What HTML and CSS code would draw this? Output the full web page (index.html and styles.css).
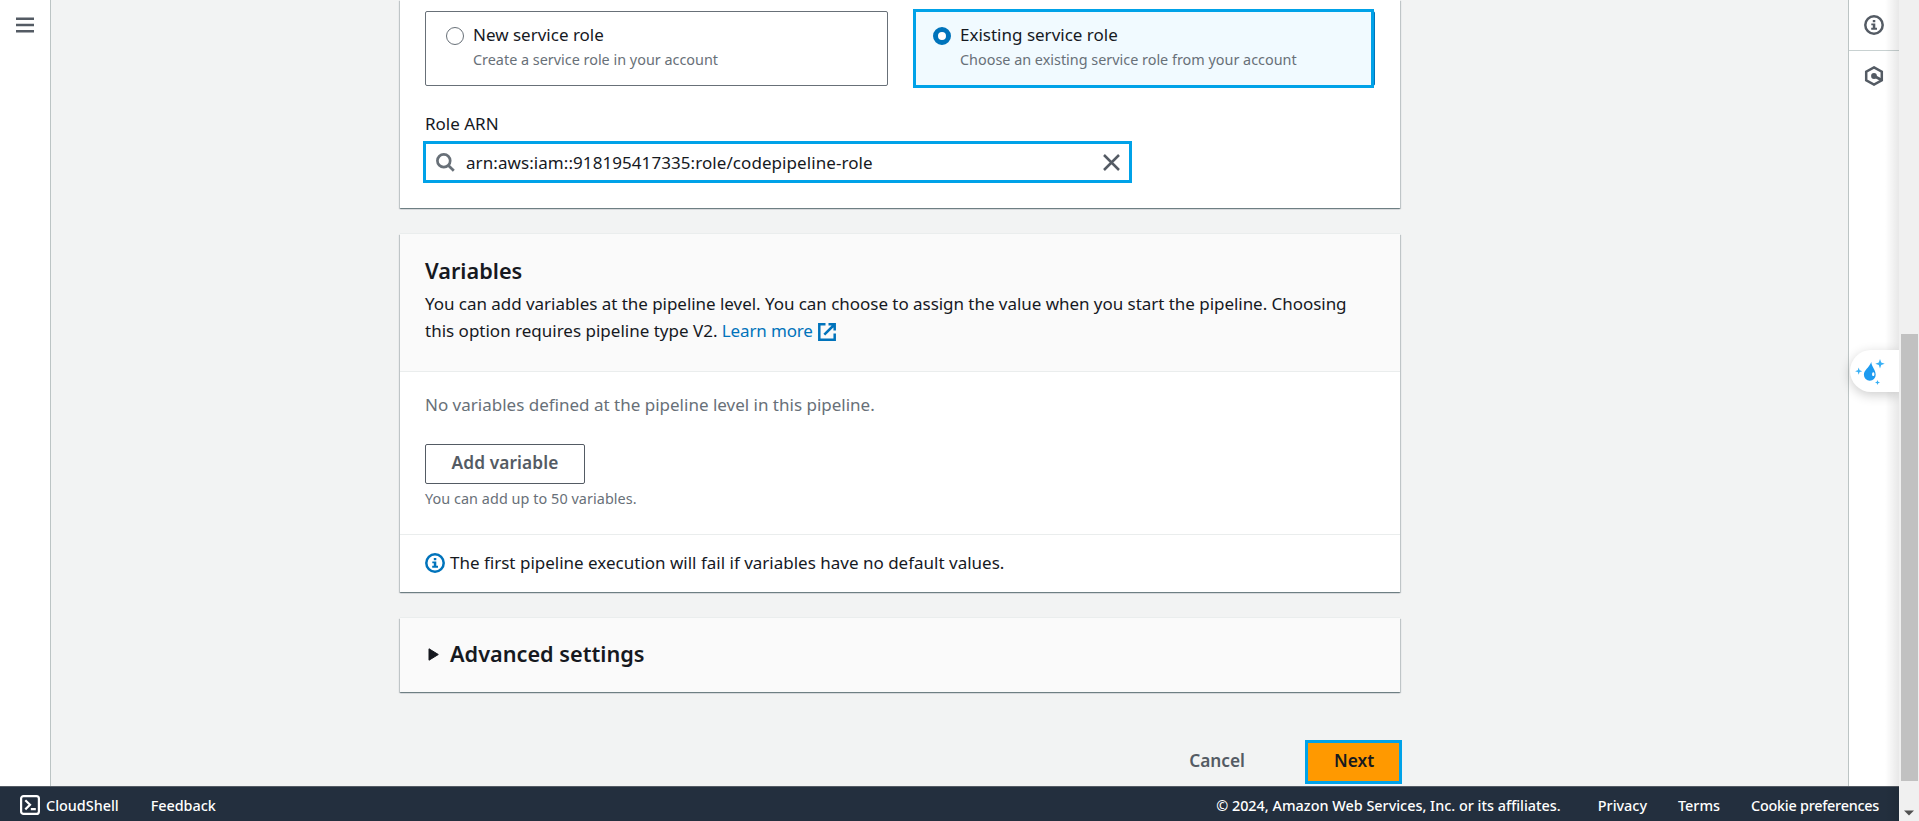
FILE: index.html
```
<!DOCTYPE html>
<html lang="en">
<head>
<meta charset="utf-8">
<title>Create new pipeline</title>
<link rel="stylesheet" href="styles.css">
</head>
<body>
<div class="app">
  <div class="workspace">
    <nav class="rail rail-left">
      <svg class="menu-icon" width="18" height="18" viewBox="0 0 18 18"><path d="M0 2.700h18M0 9h18M0 15.300h18" stroke="#545b64" stroke-width="2.500"/></svg>
    </nav>
    <main class="content">
      <section class="panel panel-role">
        <div class="tiles">
          <div class="tile">
            <span class="radio"></span>
            <div class="tile-text"><div class="label">New service role</div><div class="hint">Create a service role in your account</div></div>
          </div>
          <div class="tile tile-selected">
            <span class="radio radio-checked"></span>
            <div class="tile-text"><div class="label">Existing service role</div><div class="hint">Choose an existing service role from your account</div></div>
            <span class="tile-frame"></span>
          </div>
        </div>
        <div class="label field-label">Role ARN</div>
        <div class="search">
          <svg width="19" height="19" viewBox="0 0 19 19" fill="none" stroke="#687078" stroke-width="2.700"><circle cx="7.800" cy="7.800" r="6.400"/><path d="M12.200 12.200l5.600 5.600"/></svg>
          <span class="search-value">arn:aws:iam::918195417335:role/codepipeline-role</span>
          <svg width="17" height="17" viewBox="0 0 17 17"><path d="M1 1l15 15M16 1L1 16" stroke="#545b64" stroke-width="2.500"/></svg>
        </div>
      </section>

      <section class="panel">
        <header class="panel-head">
          <h2>Variables</h2>
          <p><span class="lead">You can add variables at the pipeline level. You can choose to assign the value when you start the pipeline. Choosing</span><br>this option requires pipeline type V2. <a class="link">Learn more</a><svg class="external" width="18" height="18" viewBox="0 0 18 18" fill="none" stroke="#0073bb" stroke-width="2.500"><path d="M7.500 1.300H1.300v15.400h15.400V10.500M10.500 1.300h6.200v6.200M16.500 1.500L6.300 11.700"/></svg></p>
        </header>
        <div class="panel-body">
          <p class="empty">No variables defined at the pipeline level in this pipeline.</p>
          <button class="btn">Add variable</button>
          <div class="hint">You can add up to 50 variables.</div>
        </div>
        <footer class="panel-foot">
          <svg width="20" height="20" viewBox="0 0 20 20"><circle cx="10" cy="10" r="8.700" fill="none" stroke="#0073bb" stroke-width="2.500"/><path d="M8.800 5h2.500v2.200H8.800zM7.300 8.400h4v4.400H13v2H7.200v-2h1.600v-2.500H7.300z" fill="#0073bb"/></svg>
          <span>The first pipeline execution will fail if variables have no default values.</span>
        </footer>
      </section>

      <section class="panel panel-advanced">
        <svg width="11" height="13" viewBox="0 0 11 13"><path d="M1 .8L10.300 6.500 1 12.200z" fill="#16191f" stroke="#16191f" stroke-linejoin="round"/></svg>
        <h2>Advanced settings</h2>
      </section>

      <div class="actions">
        <button class="btn btn-link">Cancel</button>
        <button class="btn btn-primary">Next</button>
      </div>
    </main>
    <aside class="rail rail-right">
      <div class="rail-item">
        <svg width="20" height="20" viewBox="0 0 20 20"><circle cx="10" cy="10" r="8.700" fill="none" stroke="#545b64" stroke-width="2.500"/><path d="M8.800 5h2.500v2.200H8.800zM7.300 8.400h4v4.400H13v2H7.200v-2h1.600v-2.500H7.300z" fill="#545b64"/></svg>
      </div>
      <div class="rail-item">
        <svg width="20" height="20" viewBox="0 0 20 20"><path d="M10 1.400L17.800 5.700V14.300L10 18.600 2.200 14.300V5.700z" fill="none" stroke="#545b64" stroke-width="2.500"/><circle cx="10" cy="10" r="2.900" fill="#545b64"/><path d="M10 10l7.600 4" stroke="#545b64" stroke-width="2.600"/></svg>
      </div>
    </aside>
  </div>
  <footer class="bar">
    <svg width="20" height="20" viewBox="0 0 20 20" fill="none" stroke="#fff" stroke-width="2.200"><rect x="1.100" y="1.100" width="17.800" height="17.800" rx="2.500"/><path d="M5.300 5.200L10 9.800l-4.700 4.600M10.800 14.200h5"/></svg>
    <span class="shell">CloudShell</span>
    <span class="feedback">Feedback</span>
    <span class="copyright">© 2024, Amazon Web Services, Inc. or its affiliates.</span>
    <span class="privacy">Privacy</span>
    <span class="terms">Terms</span>
    <span class="cookies">Cookie preferences</span>
  </footer>
  <div class="edge-shade"></div>
  <div class="widget">
    <svg width="49" height="42" viewBox="0 0 49 42" fill="#1d9bf0"><path d="M21.300 12C21.500 17 25.700 19.500 25.700 24.800a5.900 6 0 0 1-11.800 0C13.900 20 19 18 21.300 12z"/><path d="M23.200 22.300a1.200 1.900 0 1 0 .1 0z" fill="#fff"/><path fill="#38b0f5" d="M30 9l1.200 3.500 3.500 1.200-3.500 1.200L30 18.400l-1.200-3.500-3.500-1.200 3.500-1.200zM8.700 17.600l.9 2.700 2.700.9-2.700.9-.9 2.700-.9-2.700-2.700-.9 2.700-.9zM27.500 30l.7 1.800 1.800.7-1.800.7-.7 1.800-.7-1.800-1.800-.7 1.800-.7z"/></svg>
  </div>
</div>
<div class="scrollbar">
  <div class="thumb"></div>
  <svg class="arrow" width="10" height="6" viewBox="0 0 10 6"><path d="M0 .5h10L5 5.500z" fill="#505050"/></svg>
</div>
</body>
</html>
```
FILE: styles.css
```
* { box-sizing: border-box; }
body {
  margin: 0;
  height: 821px;
  display: flex;
  overflow: hidden;
  background: #f2f3f3;
  color: #16191f;
  font: 400 17px/27px "Noto Sans", sans-serif;
}
svg { display: block; flex: none; }
h2, p { margin: 0; }
h2 { font-size: 21.7px; line-height: 30px; font-weight: 600; }

.app { position: relative; flex: 1; display: flex; flex-direction: column; }
.workspace { height: 786px; display: flex; }

.rail { flex: none; background: #fff; }
.rail-left { width: 51px; border-right: 1px solid #bcc4c4; padding: 16px; }
.rail-right { width: 51px; border-left: 1px solid #bcc4c4; }
.rail-item { height: 51px; display: flex; align-items: center; justify-content: center; border-bottom: 1px solid #c8d1d1; }
.rail-item + .rail-item { height: 50px; border-bottom: 0; }

.content { width: 1000px; margin-left: 349px; margin-right: auto; display: flex; flex-direction: column; }
.panel {
  flex: none;
  margin-bottom: 26px;
  background: #fff;
  box-shadow: 0 1px 1px 0 rgba(0, 28, 36, .35), 1px 1px 1px 0 rgba(0, 28, 36, .16), -1px 1px 1px 0 rgba(0, 28, 36, .16), 0 -1px 0 0 #eaeded;
}
.panel-role { height: 208px; padding: 11px 25px 25px; }

.tiles { display: grid; grid-template-columns: 463px 462px; column-gap: 25px; height: 75px; }
.tile { position: relative; display: flex; gap: 9px; padding: 9px 20px; border: 1px solid #687078; border-radius: 2px; }
.tile-selected { padding-left: 19px; background: #f1faff; border-color: #0073bb; }
.tile-frame { position: absolute; left: -1px; top: -3px; width: 461px; height: 79px; border: 3px solid #00a2e8; }
.radio { flex: none; width: 18px; height: 18px; margin-top: 6px; border: 1px solid #687078; border-radius: 50%; background: #fff; }
.radio-checked { border: 5.500px solid #0073bb; }
.hint { font-size: 14.4px; line-height: 22px; color: #687078; }
.tile .hint { margin-top: 1px; }
.field-label { margin-top: 24px; }
.search {
  display: flex;
  align-items: center;
  width: 709px;
  height: 42px;
  margin: 4px 0 0 -2px;
  padding: 0 9px 0 10px;
  border: 3px solid #00a2e8;
}
.search-value { flex: 1; margin-left: 11px; letter-spacing: .07px; }

.panel-head { height: 138px; padding: 22px 25px 0; background: #fafafa; border-bottom: 1px solid #eaeded; }
.panel-head p { margin-top: 4px; white-space: nowrap; }
.lead { letter-spacing: -.04px; }
.link { color: #0073bb; letter-spacing: -.15px; }
.external { display: inline-block; margin-left: 5px; vertical-align: -4px; }
.panel-body { height: 162px; padding: 19px 25px 0; }
.empty { color: #687078; }
.btn {
  display: block;
  height: 40px;
  padding: 0 25px 4px;
  border: 1px solid #545b64;
  border-radius: 2px;
  background: #fff;
  color: #545b64;
  font: 600 17.3px/27px "Noto Sans", sans-serif;
}
.panel-body .btn { width: 160px; margin: 26px 0 4px; letter-spacing: .1px; }
.panel-body .hint { letter-spacing: .06px; }
.panel-foot { height: 58px; display: flex; gap: 5px; padding: 14px 25px; border-top: 1px solid #eaeded; }
.panel-foot svg { margin-top: 4px; }
.panel-advanced { height: 74px; display: flex; gap: 11px; padding: 21px 28px; background: #fafafa; }
.panel-advanced svg { margin-top: 9px; }

.actions { display: flex; justify-content: flex-end; align-items: center; gap: 34px; margin: 22px -2px 0 0; }
.btn-link { border-color: transparent; background: none; }
.btn-primary { width: 97px; height: 44px; padding-left: 26px; border: 3px solid #00a2e8; border-radius: 0; background: #f90; color: #16191f; }

.bar {
  height: 35px;
  display: flex;
  align-items: center;
  padding: 2px 20px 0 20px;
  border-top: 1px solid #545b64;
  background: #232f3e;
  color: #fff;
  font-size: 14.4px;
  font-weight: 500;
  white-space: nowrap;
}
.shell { margin-left: 6px; }
.feedback { margin-left: 32px; letter-spacing: -.05px; }
.copyright { margin-left: auto; }
.privacy { margin-left: 37px; }
.terms { margin-left: 31px; }
.cookies { margin-left: 31px; letter-spacing: -.25px; }

.edge-shade { position: absolute; top: 0; right: 0; width: 14px; height: 821px; background: linear-gradient(to right, rgba(0, 0, 0, 0), rgba(0, 0, 0, .09)); }
.widget { position: absolute; top: 350px; right: 0; width: 49px; height: 42px; border-radius: 21px 0 0 21px; background: #fff; box-shadow: 0 3px 12px rgba(0, 0, 0, .2); clip-path: inset(-20px 0 -20px -20px); }

.scrollbar { flex: none; width: 20px; padding: 334px 1px 0 2px; background: #f0f0f0; }
.thumb { height: 447px; background: #c1c1c1; }
.arrow { margin: 29px 0 0 3px; }
```
